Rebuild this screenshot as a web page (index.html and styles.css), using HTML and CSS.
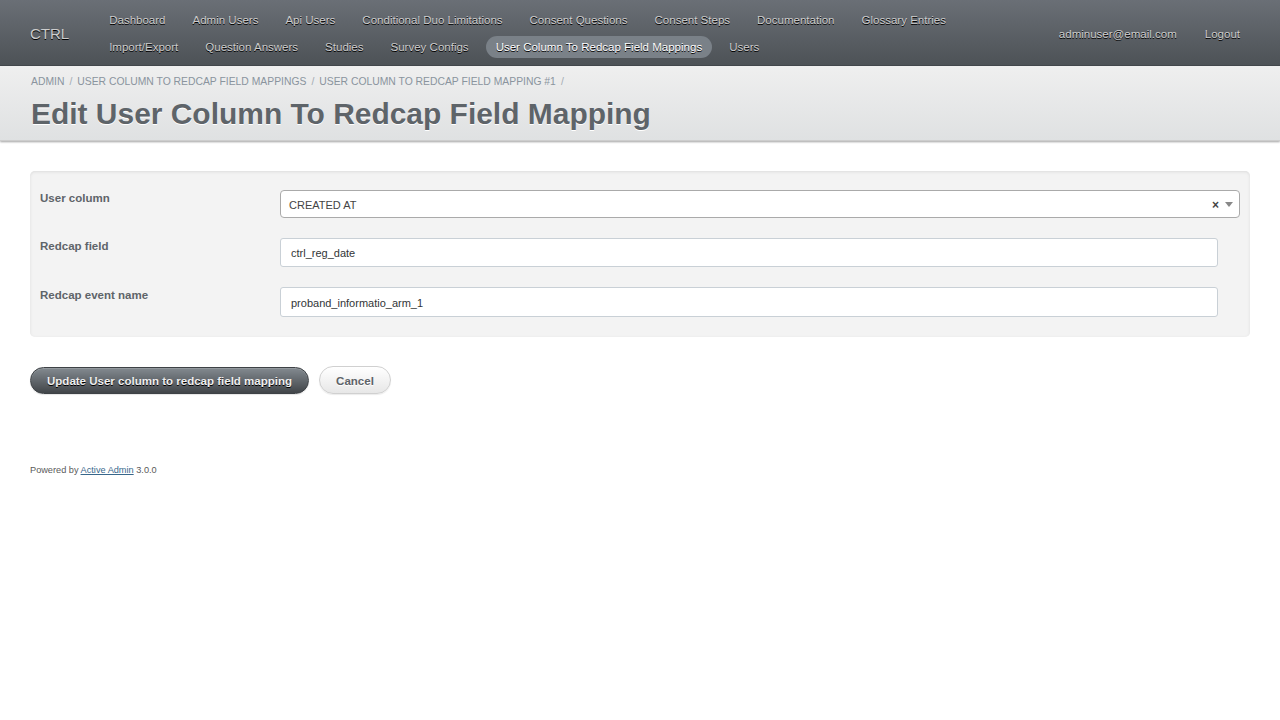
FILE: index.html
```html
<!DOCTYPE html>
<html>
<head>
<meta charset="utf-8">
<title>Edit User Column To Redcap Field Mapping | CTRL</title>
<link rel="stylesheet" href="styles.css">
</head>
<body>
<div class="header">
  <h1 class="site-title">CTRL</h1>
  <ul class="tabs">
    <li><a href="#">Dashboard</a></li>
    <li><a href="#">Admin Users</a></li>
    <li><a href="#">Api Users</a></li>
    <li><a href="#">Conditional Duo Limitations</a></li>
    <li><a href="#">Consent Questions</a></li>
    <li><a href="#">Consent Steps</a></li>
    <li><a href="#">Documentation</a></li>
    <li><a href="#">Glossary Entries</a></li>
    <li><a href="#">Import/Export</a></li>
    <li><a href="#">Question Answers</a></li>
    <li><a href="#">Studies</a></li>
    <li><a href="#">Survey Configs</a></li>
    <li class="current"><a href="#">User Column To Redcap Field Mappings</a></li>
    <li><a href="#">Users</a></li>
  </ul>
  <ul class="utility">
    <li><a href="#">adminuser@email.com</a></li>
    <li><a href="#">Logout</a></li>
  </ul>
</div>

<div class="title-bar">
  <div class="breadcrumb">
    <a href="#">Admin</a><span class="sep">/</span><a href="#">User Column To Redcap Field Mappings</a><span class="sep">/</span><a href="#">User Column To Redcap Field Mapping #1</a><span class="sep">/</span>
  </div>
  <h2 class="page-title">Edit User Column To Redcap Field Mapping</h2>
</div>

<div class="content">
  <form class="mapping-form">
    <fieldset class="inputs">
      <ol>
        <li class="field">
          <label class="label">User column</label>
          <div class="select2">
            <span class="select2-value">CREATED AT</span>
            <span class="select2-clear">×</span>
            <span class="select2-arrow"></span>
          </div>
        </li>
        <li class="field">
          <label class="label">Redcap field</label>
          <input class="text-input" type="text" value="ctrl_reg_date">
        </li>
        <li class="field">
          <label class="label">Redcap event name</label>
          <input class="text-input" type="text" value="proband_informatio_arm_1">
        </li>
      </ol>
    </fieldset>
    <div class="actions">
      <button type="button" class="btn-primary">Update User column to redcap field mapping</button>
      <a href="#" class="btn-cancel">Cancel</a>
    </div>
  </form>
</div>

<div class="footer">
  Powered by <a href="#">Active Admin</a> 3.0.0
</div>
</body>
</html>
```

FILE: styles.css
```css
* { box-sizing: border-box; }

html, body {
  margin: 0;
  padding: 0;
}

body {
  font-family: "Liberation Sans", Arial, sans-serif;
  font-size: 11.52px;
  line-height: 1.5;
  color: #323537;
  background: #fff;
}

ul, ol {
  list-style: none;
  margin: 0;
  padding: 0;
}

/* ---------- header ---------- */
.header {
  display: flex;
  align-items: center;
  height: 66px;
  padding: 2px 30px 0;
  background: linear-gradient(to bottom, #6a6f76 0%, #4d5256 100%);
  border-bottom: 1px solid #44494d;
}

.site-title {
  margin: 0 30px 0 0;
  font-size: 15px;
  font-weight: normal;
  color: #cdcdcd;
  text-shadow: 0 1px 0 #000;
  line-height: 20px;
}

.tabs {
  flex: 1;
  display: flex;
  flex-wrap: wrap;
  align-content: center;
}

.tabs li {
  margin-right: 7px;
  height: 27px;
  display: flex;
  align-items: center;
}

.tabs a,
.utility a {
  display: block;
  padding: 3px 10px 2px;
  color: #cdcdcd;
  text-decoration: none;
  text-shadow: 0 1px 0 #000;
  border-radius: 10px;
  line-height: 17px;
}

.tabs li.current a {
  background: #7a8188;
  color: #fff;
  border-radius: 11px;
}

.utility {
  display: flex;
  gap: 8px;
}

/* ---------- title bar ---------- */
.title-bar {
  padding: 7px 30px 6px 31px;
  background: linear-gradient(to bottom, #efefef 0%, #dfe1e2 100%);
  border-bottom: 1px solid #cdcdcd;
  box-shadow: 0 1px 2px rgba(0, 0, 0, 0.37);
}

.breadcrumb {
  font-size: 10.37px;
  line-height: 17px;
  text-transform: uppercase;
  color: #8a949e;
}

.breadcrumb a {
  color: #8a949e;
  text-decoration: none;
}

.breadcrumb .sep {
  margin: 0 5px;
  color: #a3abb2;
}

.page-title {
  margin: 4px 0 0;
  font-size: 29.95px;
  line-height: 40px;
  font-weight: bold;
  color: #5e6469;
  text-shadow: 0 1px 0 #fff;
}

/* ---------- content ---------- */
.content {
  padding: 30px 30px 0;
}

.inputs {
  margin: 0;
  padding: 10px 0;
  border: 0;
  border-radius: 5px;
  background: #f3f3f3;
  box-shadow: inset 0 1px 3px #dcdcdc;
}

.inputs ol {
  display: flex;
  flex-direction: column;
}

.field {
  display: flex;
  align-items: flex-start;
  padding: 9px 10px 10px;
}

.field + .field {
  padding-top: 10px;
}

.label {
  width: 20%;
  flex: none;
  padding-top: 0;
  font-weight: bold;
  color: #5e6469;
}

.text-input {
  width: calc(80% - 22px);
  height: 29px;
  padding: 6px 10px 5px;
  font-family: "Liberation Sans", Arial, sans-serif;
  font-size: 11px;
  color: #323537;
  background: #fff;
  border: 1px solid #c9d0d6;
  border-radius: 3px;
  outline: none;
}

.field:nth-child(3) .text-input {
  height: 30px;
}

.select2 {
  position: relative;
  width: 80%;
  height: 28px;
  display: flex;
  align-items: center;
  padding: 2px 6px 0 8px;
  background: #fff;
  border: 1px solid #aaa;
  border-radius: 4px;
  font-size: 11px;
  color: #444;
}

.select2-value {
  flex: 1;
}

.select2-clear {
  font-weight: bold;
  font-size: 12px;
  color: #444;
  margin-right: 6px;
  line-height: 1;
}

.select2-arrow {
  width: 0;
  height: 0;
  border-style: solid;
  border-width: 5px 4px 0 4px;
  border-color: #888 transparent transparent transparent;
  margin-top: -2px;
}

/* ---------- actions ---------- */
.actions {
  display: flex;
  align-items: center;
  gap: 10px;
  margin-top: 29px;
}

.btn-primary {
  height: 27px;
  padding: 2px 16px 0;
  font-family: "Liberation Sans", Arial, sans-serif;
  font-size: 11.52px;
  font-weight: bold;
  color: #efefef;
  text-shadow: 0 1px 0 #000;
  background: linear-gradient(to bottom, #838a90 0%, #414549 100%);
  border: 1px solid #3e4246;
  border-radius: 200px;
  box-shadow: 0 1px 1px rgba(0,0,0,0.1), inset 0 1px 0 rgba(255,255,255,0.15);
  cursor: pointer;
}

.btn-cancel {
  display: flex;
  align-items: center;
  height: 28px;
  padding: 4px 16px 0;
  font-weight: bold;
  color: #5e6469;
  text-decoration: none;
  text-shadow: 0 1px 0 #fff;
  background: linear-gradient(to bottom, #ffffff 0%, #e7e7e7 100%);
  border: 1px solid #d0d0d0;
  border-radius: 200px;
  box-shadow: 0 1px 1px rgba(0,0,0,0.08);
}

/* ---------- footer ---------- */
.footer {
  padding: 69px 30px 30px;
  font-size: 9.2px;
  line-height: 14px;
  color: #5a5a5a;
}

.footer a {
  color: #38678b;
  text-decoration: underline;
}
```
